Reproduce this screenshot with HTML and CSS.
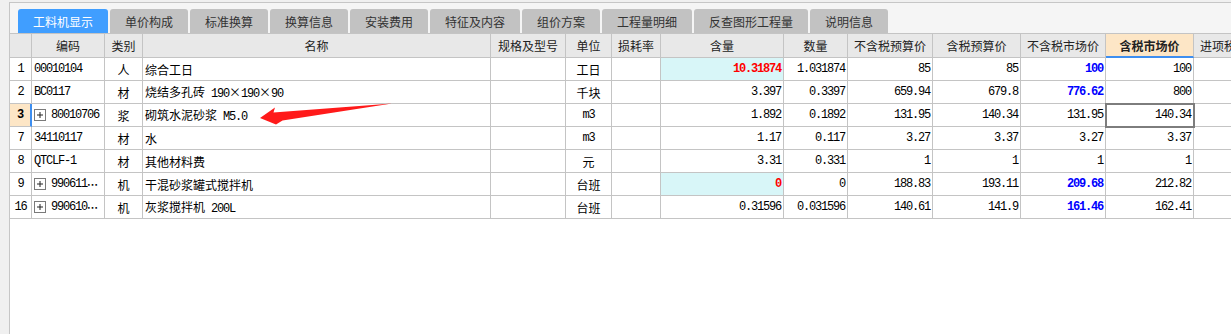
FILE: index.html
```html
<!DOCTYPE html>
<html lang="zh">
<head>
<meta charset="utf-8">
<title>工料机显示</title>
<link rel="stylesheet" href="styles.css">
</head>
<body>
<div class="panel">
  <div class="tabs">
    <div class="tab active t90">工料机显示</div>
    <div class="tab t78">单价构成</div>
    <div class="tab t78">标准换算</div>
    <div class="tab t78">换算信息</div>
    <div class="tab t78">安装费用</div>
    <div class="tab t90">特征及内容</div>
    <div class="tab t78">组价方案</div>
    <div class="tab t90">工程量明细</div>
    <div class="tab t114">反查图形工程量</div>
    <div class="tab t78">说明信息</div>
  </div>
  <div class="grid">
    <div class="c h"></div>
    <div class="c h">编码</div>
    <div class="c h">类别</div>
    <div class="c h">名称</div>
    <div class="c h">规格及型号</div>
    <div class="c h">单位</div>
    <div class="c h">损耗率</div>
    <div class="c h">含量</div>
    <div class="c h">数量</div>
    <div class="c h">不含税预算价</div>
    <div class="c h">含税预算价</div>
    <div class="c h">不含税市场价</div>
    <div class="c h hl">含税市场价</div>
    <div class="c h last">进项税额</div>

    <div class="c rn m">1</div>
    <div class="c m">00010104</div>
    <div class="c ctr">人</div>
    <div class="c">综合工日</div>
    <div class="c"></div>
    <div class="c ctr">工日</div>
    <div class="c"></div>
    <div class="c r m cyan red">10.31874</div>
    <div class="c r m">1.031874</div>
    <div class="c r m">85</div>
    <div class="c r m">85</div>
    <div class="c r m blue">100</div>
    <div class="c r m">100</div>
    <div class="c last"></div>

    <div class="c rn m">2</div>
    <div class="c m">BC0117</div>
    <div class="c ctr">材</div>
    <div class="c"><span>烧结多孔砖<span class="m"> 190</span>×<span class="m">190</span>×<span class="m">90</span></span></div>
    <div class="c"></div>
    <div class="c ctr">千块</div>
    <div class="c"></div>
    <div class="c r m">3.397</div>
    <div class="c r m">0.3397</div>
    <div class="c r m">659.94</div>
    <div class="c r m">679.8</div>
    <div class="c r m blue">776.62</div>
    <div class="c r m">800</div>
    <div class="c last"></div>

    <div class="c rn m sel">3</div>
    <div class="c"><svg class="exp" width="12" height="12" viewBox="0 0 12 12"><rect x="0.5" y="0.5" width="11" height="11" fill="#fff" stroke="#7a7a7a"/><path d="M3 6h6M6 3v6" stroke="#222" stroke-width="1"/></svg><span class="m">80010706</span></div>
    <div class="c ctr">浆</div>
    <div class="c"><span>砌筑水泥砂浆<span class="m"> M5.0</span></span></div>
    <div class="c"></div>
    <div class="c ctr m">m3</div>
    <div class="c"></div>
    <div class="c r m">1.892</div>
    <div class="c r m">0.1892</div>
    <div class="c r m">131.95</div>
    <div class="c r m">140.34</div>
    <div class="c r m">131.95</div>
    <div class="c r m cur">140.34</div>
    <div class="c last"></div>

    <div class="c rn m">7</div>
    <div class="c m">34110117</div>
    <div class="c ctr">材</div>
    <div class="c">水</div>
    <div class="c"></div>
    <div class="c ctr m">m3</div>
    <div class="c"></div>
    <div class="c r m">1.17</div>
    <div class="c r m">0.117</div>
    <div class="c r m">3.27</div>
    <div class="c r m">3.37</div>
    <div class="c r m">3.27</div>
    <div class="c r m">3.37</div>
    <div class="c last"></div>

    <div class="c rn m">8</div>
    <div class="c m">QTCLF-1</div>
    <div class="c ctr">材</div>
    <div class="c">其他材料费</div>
    <div class="c"></div>
    <div class="c ctr">元</div>
    <div class="c"></div>
    <div class="c r m">3.31</div>
    <div class="c r m">0.331</div>
    <div class="c r m">1</div>
    <div class="c r m">1</div>
    <div class="c r m">1</div>
    <div class="c r m">1</div>
    <div class="c last"></div>

    <div class="c rn m">9</div>
    <div class="c"><svg class="exp" width="12" height="12" viewBox="0 0 12 12"><rect x="0.5" y="0.5" width="11" height="11" fill="#fff" stroke="#7a7a7a"/><path d="M3 6h6M6 3v6" stroke="#222" stroke-width="1"/></svg><span class="m">990611</span><span class="dots">⋯</span></div>
    <div class="c ctr">机</div>
    <div class="c">干混砂浆罐式搅拌机</div>
    <div class="c"></div>
    <div class="c ctr">台班</div>
    <div class="c"></div>
    <div class="c r m cyan red">0</div>
    <div class="c r m">0</div>
    <div class="c r m">188.83</div>
    <div class="c r m">193.11</div>
    <div class="c r m blue">209.68</div>
    <div class="c r m">212.82</div>
    <div class="c last"></div>

    <div class="c rn m">16</div>
    <div class="c"><svg class="exp" width="12" height="12" viewBox="0 0 12 12"><rect x="0.5" y="0.5" width="11" height="11" fill="#fff" stroke="#7a7a7a"/><path d="M3 6h6M6 3v6" stroke="#222" stroke-width="1"/></svg><span class="m">990610</span><span class="dots">⋯</span></div>
    <div class="c ctr">机</div>
    <div class="c"><span>灰浆搅拌机<span class="m"> 200L</span></span></div>
    <div class="c"></div>
    <div class="c ctr">台班</div>
    <div class="c"></div>
    <div class="c r m">0.31596</div>
    <div class="c r m">0.031596</div>
    <div class="c r m">140.61</div>
    <div class="c r m">141.9</div>
    <div class="c r m blue">161.46</div>
    <div class="c r m">162.41</div>
    <div class="c last"></div>
  </div>
</div>
<svg class="arrow" width="1231" height="334" viewBox="0 0 1231 334">
  <polygon points="260,118 275,107.5 273.5,112.5 392,103.5 282.5,120.5 276,124.5" fill="#ff1a1a"/>
</svg>
</body>
</html>
```
FILE: styles.css
```css
html, body {
  margin: 0;
  height: 100%;
}
body {
  background: #f0f0f0;
  font-family: "Noto Sans CJK SC", sans-serif;
  overflow: hidden;
  position: relative;
}
.panel {
  margin: 2px 0 0 9px;
  border-left: 1px solid #c6c6c6;
  border-top: 1px solid #c6c6c6;
  background: #fff;
  height: calc(100vh - 3px);
  overflow: hidden;
}
.tabs {
  display: flex;
  gap: 2px;
  padding: 6px 0 0 8px;
  height: 30px;
  box-sizing: border-box;
  background: #f5f5f5;
}
.tab {
  height: 24px;
  border-radius: 3px 3px 0 0;
  background: #c2c2c2;
  color: #333;
  font-size: 12px;
  display: flex;
  align-items: center;
  justify-content: center;
}
.tab.active {
  background: #409eff;
  color: #fff;
}
.t78 { width: 78px; }
.t90 { width: 90px; }
.t114 { width: 114px; }

.grid {
  display: grid;
  grid-template-columns: 22px 73px 38px 348px 75px 46px 49px 123px 64px 85px 88px 85px 88px 60px;
  grid-template-rows: 24px;
  grid-auto-rows: 23px;
  border-top: 1px solid #c4c4c4;
  width: max-content;
}
.c {
  box-sizing: border-box;
  border-right: 1px solid #c4c4c4;
  border-bottom: 1px solid #c4c4c4;
  display: flex;
  align-items: center;
  padding: 0 2px;
  white-space: pre;
  overflow: hidden;
  font-size: 12px;
  color: #000;
}
.h {
  background: #e8e8e8;
  justify-content: center;
  color: #222;
}
.h.hl {
  background: #fde6c6;
  font-weight: bold;
  border-bottom: 2px solid #3d8ef0;
}
.last {
  border-right: none;
}
.m {
  font-family: "Liberation Mono", monospace;
  letter-spacing: -1.2px;
}
.r {
  justify-content: flex-end;
  padding-right: 2px;
}
.ctr {
  justify-content: center;
}
.rn {
  justify-content: center;
  padding: 0;
}
.rn.sel {
  background: #fde6c6;
  font-weight: bold;
  border-right: 2px solid #3d8ef0;
}
.red {
  color: #ff0000;
  font-weight: bold;
}
.blue {
  color: #0000ff;
  font-weight: bold;
}
.cyan {
  background: #d8f6f8;
}
.cur {
  outline: 2px solid #7d7d7d;
  outline-offset: -1px;
  position: relative;
  z-index: 1;
}
.exp {
  flex: none;
  margin: 0 5px 0 0;
}
.dots {
  font-size: 11px;
  font-weight: bold;
}
.arrow {
  position: absolute;
  left: 0;
  top: 0;
  pointer-events: none;
}
```
